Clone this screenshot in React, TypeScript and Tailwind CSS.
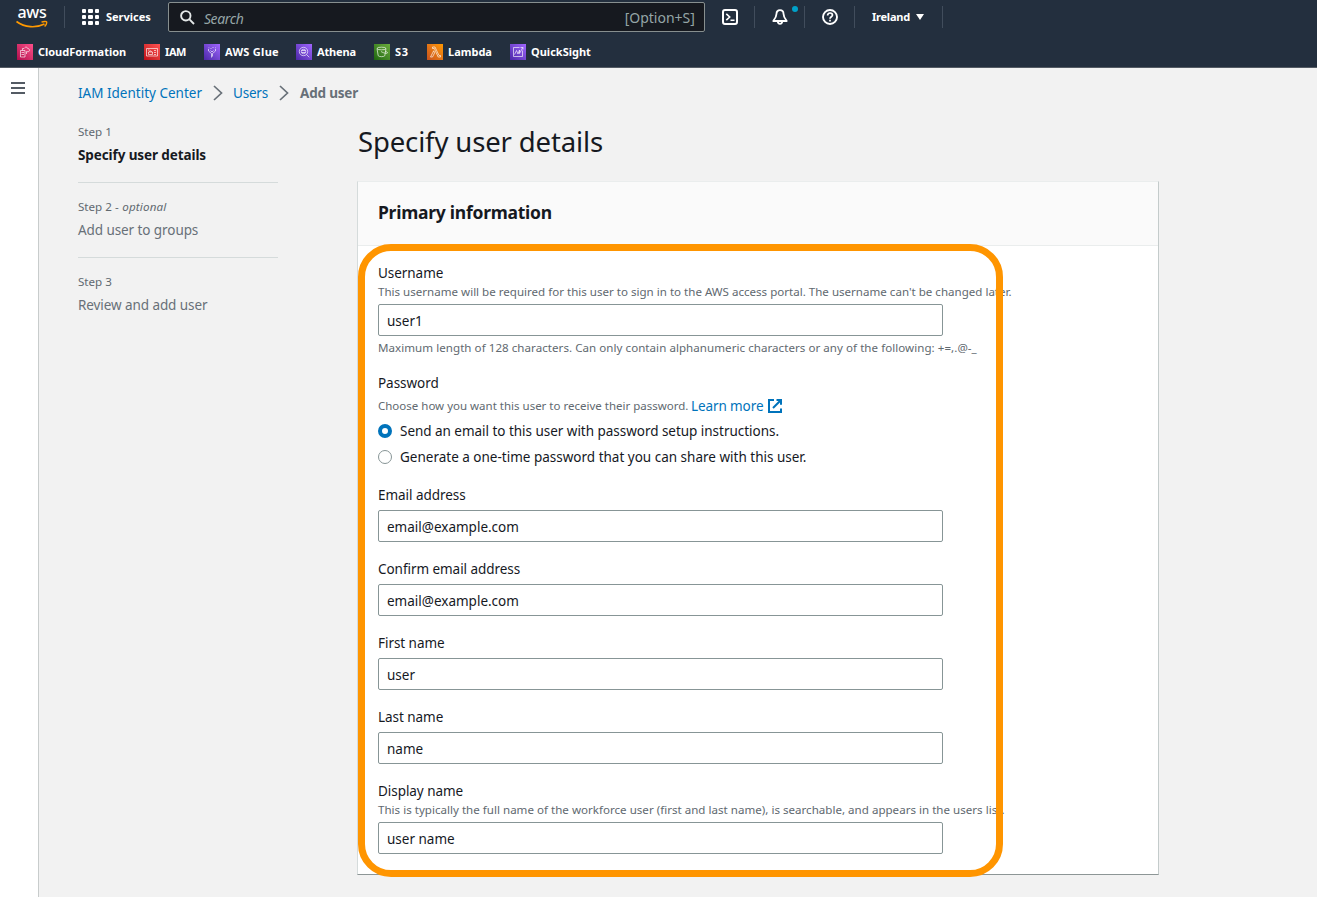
import type { ReactNode } from "react";

type Service = { name: string; width: string; fill: string; text: string; icon: ReactNode };

const services: Service[] = [
  {
    name: "CloudFormation",
    width: "w-[127px]",
    fill: "from-[#b0084d] to-[#ff4f8b]",
    text: "tracking-[-0.03px]",
    icon: <path d="M3.5 6.500h4.500v6.500h-4.500zM4.500 8.500h2.500M4.500 10.500h2.500M5.500 6.500V4.500h1.500M7.500 4c1-1.400 2.800-1 3.200.5 2.400.2 2.400 3 .3 3.200H9.500M9.500 7.500v2.500" />,
  },
  {
    name: "IAM",
    width: "w-[60px]",
    fill: "from-[#bd0816] to-[#ff5252]",
    text: "tracking-[-0.4px]",
    icon: <path d="M2.500 4.500h11v7.500h-11zM4 6h1.500M4.500 10.500h4v-2.500h-4zM5.500 8c0-1.500 2-1.500 2 0M10 6.500h2M10 8.500h2M10 10.500h2" />,
  },
  {
    name: "AWS Glue",
    width: "w-[92px]",
    fill: "from-[#4d27a8] to-[#a166ff]",
    text: "tracking-[0.28px]",
    icon: <path d="M4.500 5v2L7.500 9.500v4M11.500 5v2L8.500 9.500v3M6.500 6.500l1.500 1.500 1.500-1.500M6.500 4.500h1M8.500 3.500h1M4.500 3.800h.8M11 3.800h.8" />,
  },
  {
    name: "Athena",
    width: "w-[78px]",
    fill: "from-[#4d27a8] to-[#a166ff]",
    text: "tracking-[-0.15px]",
    icon: (
      <>
        <circle cx="7.500" cy="7.500" r="4.200" />
        <circle cx="7.500" cy="7.500" r="2.200" />
        <path d="M10.500 10.500l2.800 2.800M5.500 6.500h4M5.500 8.500h4" />
      </>
    ),
  },
  {
    name: "S3",
    width: "w-[53px]",
    fill: "from-[#1b660f] to-[#6cae3e]",
    text: "tracking-[0.8px]",
    icon: (
      <>
        <ellipse cx="7.500" cy="4.500" rx="4.500" ry="1.300" />
        <path d="M3 4.500l1.200 7.200c1 1.300 5.600 1.300 6.600 0L12 4.500M7 7.500c2 1.400 6.500 2.600 6.500 1.300 0-.6-1-1.200-2.200-1.500" />
      </>
    ),
  },
  {
    name: "Lambda",
    width: "w-[83px]",
    fill: "from-[#c8511b] to-[#ff9900]",
    text: "tracking-normal",
    icon: <path d="M5.500 3h2.500l4 8.500h1.500v1.500h-2.300L7.300 4.500H5.500zM6.700 6.800L3.500 13h2l2.200-4.200z" />,
  },
  {
    name: "QuickSight",
    width: "w-[90px]",
    fill: "from-[#4d27a8] to-[#a166ff]",
    text: "tracking-normal",
    icon: <path d="M9.500 3.500h-6v9h9v-6M4.500 10.500L6.500 6.500l1.500 3.500 1.500-4v3.500l3.300-6M10.500 3.500h2.500v2" />,
  },
];

function Divider({ className = "" }: { className?: string }) {
  return <span className={`h-[22px] w-px shrink-0 bg-[#414d5c] ${className}`} />;
}

function AwsLogo() {
  return (
    <div className="flex w-8 flex-col items-center">
      <span className="h-[15px] text-[16px] leading-[14px] font-medium tracking-[-0.2px] text-white">aws</span>
      <svg width="32" height="9" viewBox="0 0 32 9" fill="none" stroke="#ff9900" strokeWidth="1.700">
        <path d="M.5 1.500C9 7.800 20 8.200 28.500 4" />
        <path d="M25.500 2.200c2-.8 4.800-1 5.100-.3.300.8-.5 3-2 4.600" strokeWidth="1.400" />
      </svg>
    </div>
  );
}

function TopBar() {
  return (
    <header className="h-[68px] border-b border-[#545b64] bg-[#232f3e] text-white">
      <div className="flex h-[34px] items-center">
        <div className="ml-4 flex w-12 items-center">
          <AwsLogo />
        </div>
        <Divider />
        <div className="ml-[17px] grid grid-cols-3 gap-[2px]">
          {Array.from({ length: 9 }, (_, i) => (
            <span key={i} className="size-[4.300px] rounded-[1px] bg-white" />
          ))}
        </div>
        <span className="ml-[7px] w-[62px] text-[11px] font-bold">Services</span>
        <div className="flex h-[30px] w-[537px] items-center rounded-xs border border-[#878f8f] bg-[#16191f] pr-[9px] pl-[11px] text-[#95a5a6]">
          <svg width="15" height="15" viewBox="0 0 15 15" fill="none" stroke="#e4e8e8" strokeWidth="1.900">
            <circle cx="5.800" cy="5.800" r="4.700" />
            <path d="M9.200 9.200l4.800 4.800" />
          </svg>
          <span className="ml-[9px] flex-1 pt-[2px] text-[14px] tracking-[-0.350px] italic">Search</span>
          <span className="text-[14px]">[Option+S]</span>
        </div>
        <svg className="ml-[17px]" width="16" height="16" viewBox="0 0 16 16" fill="none" stroke="white" strokeWidth="2">
          <rect x="1" y="1" width="14" height="14" rx="2" />
          <path d="M4.300 4.800L7.700 8l-3.400 3.200M8.500 11.200h4" strokeWidth="1.600" />
        </svg>
        <Divider className="ml-4" />
        <div className="relative ml-[17px] size-4">
          <svg width="16" height="16" viewBox="0 0 16 16" fill="none" stroke="white" strokeWidth="1.800" strokeLinejoin="round">
            <path d="M8 1.200c-2.300 0-3.500 1.700-3.500 3.600 0 3-1.300 4.600-3.200 7.200h13.400c-1.900-2.600-3.200-4.200-3.200-7.200C11.500 2.900 10.300 1.200 8 1.200z" />
            <path d="M5.800 12.300c0 3.300 4.400 3.300 4.400 0" />
          </svg>
          <span className="absolute -top-[3px] left-5 size-[6px] rounded-full bg-[#00a1c9]" />
        </div>
        <Divider className="ml-4" />
        <svg className="ml-[17px]" width="16" height="16" viewBox="0 0 16 16" fill="none" stroke="white" strokeWidth="1.900">
          <circle cx="8" cy="8" r="7" />
          <path d="M5.600 6.500c0-3.300 4.900-3.200 4.900-.4C10.500 7.800 8 7.700 8 9.800M8 10.800v1.700" strokeWidth="1.700" />
        </svg>
        <Divider className="ml-4" />
        <span className="ml-[17px] w-11 text-[11px] font-bold tracking-[-0.2px]">Ireland</span>
        <svg width="8" height="6" viewBox="0 0 8 6" fill="white">
          <path d="M0 0h8L4 6z" />
        </svg>
        <Divider className="ml-[18px]" />
      </div>
      <nav className="flex h-[35px] items-center pl-[17px]">
        {services.map((s) => (
          <a key={s.name} className={`flex shrink-0 items-center gap-[5px] text-[11px] font-bold whitespace-nowrap ${s.width}`}>
            <svg
              className={`size-4 bg-linear-to-tr ${s.fill}`}
              viewBox="0 0 16 16"
              fill="none"
              stroke="white"
              strokeOpacity=".8"
              strokeWidth=".8"
            >
              {s.icon}
            </svg>
            <span className={`pt-[2px] ${s.text}`}>{s.name}</span>
          </a>
        ))}
      </nav>
    </header>
  );
}

function Chevron() {
  return (
    <svg className="shrink-0" width="10" height="16" viewBox="0 0 10 16" fill="none" stroke="#687078" strokeWidth="1.700">
      <path d="M1 1l7.500 7L1 15" />
    </svg>
  );
}

function Step({ label, optional, title, active, last }: { label: string; optional?: boolean; title: string; active?: boolean; last?: boolean }) {
  return (
    <li className={last ? "h-[75px]" : "mb-[14px] h-[61px] border-b border-[#d5dbdb]"}>
      <div className="h-[22px] text-[11.600px] leading-5 text-[#616970]">
        {label}
        {optional && (
          <span className="tracking-[0.180px]">
            {" "}
            - <i>optional</i>
          </span>
        )}
      </div>
      <div className={active ? "text-[13.500px] leading-[22px] font-bold tracking-[-0.100px] text-[#16191f]" : "text-[13.500px] leading-[22px] tracking-[-0.080px] text-[#687078]"}>{title}</div>
    </li>
  );
}

function TextInput({ value }: { value: string }) {
  return (
    <input
      readOnly
      value={value}
      className="block h-8 w-[565px] rounded-xs border border-[#879596] bg-white px-2 pt-[2px] text-[13.500px] text-[#16191f] outline-none"
    />
  );
}

function Label({ children }: { children: ReactNode }) {
  return <div className="h-[22px] text-[13.500px] leading-[22px] tracking-[-0.050px] text-[#16191f]">{children}</div>;
}

function Hint({ children, className }: { children: ReactNode; className: string }) {
  return <div className={`text-[11.570px] whitespace-nowrap text-[#616970] ${className}`}>{children}</div>;
}

function SimpleField({ label, value }: { label: string; value: string }) {
  return (
    <div className="mb-4">
      <Label>{label}</Label>
      <div className="mt-1">
        <TextInput value={value} />
      </div>
    </div>
  );
}

function Radio({ checked, children }: { checked?: boolean; children: ReactNode }) {
  return (
    <label className="flex h-[26px] items-center gap-2 text-[13.500px] text-[#16191f]">
      <span className={checked ? "size-[14px] rounded-full border-[4.500px] border-[#0073bb] bg-white" : "size-[14px] rounded-full border border-[#879596] bg-white"} />
      <span className={checked ? "tracking-[-0.030px]" : "tracking-normal"}>{children}</span>
    </label>
  );
}

export default function App() {
  return (
    <div className="flex h-[897px] w-[1317px] flex-col overflow-hidden bg-[#f2f2f2] font-['Noto_Sans',sans-serif]">
      <TopBar />
      <div className="flex flex-1">
        <aside className="w-[39px] border-r border-[#c8cccc] bg-white pt-[14px] pl-[11px]">
          <div className="flex w-[14px] flex-col gap-[3px]">
            <span className="h-[2px] bg-[#545b64]" />
            <span className="h-[2px] bg-[#545b64]" />
            <span className="h-[2px] bg-[#545b64]" />
          </div>
        </aside>
        <main className="pt-[14px] pl-[39px]">
          <nav className="flex h-[22px] items-center text-[13.500px] text-[#0073bb]">
            <span className="w-[135px] whitespace-nowrap">IAM Identity Center</span>
            <Chevron />
            <span className="ml-[10px] w-[46px] tracking-[-0.200px]">Users</span>
            <Chevron />
            <span className="ml-[11px] text-[13.500px] font-bold tracking-[-0.190px] text-[#687078]">Add user</span>
          </nav>
          <div className="flex">
            <ol className="w-[200px] pt-[18px]">
              <Step label="Step 1" title="Specify user details" active />
              <Step label="Step 2" optional title="Add user to groups" />
              <Step label="Step 3" title="Review and add user" last />
            </ol>
            <div className="ml-20 w-[801px] pt-5">
              <h1 className="h-[57px] text-[27.500px] leading-9 tracking-[-0.140px] text-[#16191f]">Specify user details</h1>
              <section className="relative -ml-px h-[694px] w-[802px] border border-t-[#eaeded] border-r-[#c4cbcb] border-b-[#8d9696] border-l-[#d5dbdb] bg-white">
                <h2 className="flex h-16 items-center border-b border-[#eaeded] bg-[#fafafa] pb-[2px] pl-5 text-[17.500px] font-bold tracking-[-0.250px] text-[#16191f]">
                  Primary information
                </h2>
                <div className="pt-4 pl-5">
                  <Label>Username</Label>
                  <Hint className="h-5 leading-4">
                    This username will be required for this user to sign in to the AWS access portal. The username can't be changed later.
                  </Hint>
                  <TextInput value="user1" />
                  <Hint className="mt-1 mb-3 h-5 leading-4 tracking-[0.045px]">
                    Maximum length of 128 characters. Can only contain alphanumeric characters or any of the following: +=,.@-_
                  </Hint>
                  <Label>Password</Label>
                  <div className="flex h-[24px] items-center text-[#0073bb]">
                    <span className="w-[313px] text-[11.500px] whitespace-nowrap text-[#616970]">Choose how you want this user to receive their password.</span>
                    <span className="w-[77px] text-[13.500px] tracking-[-0.100px] whitespace-nowrap">Learn more</span>
                    <svg width="14" height="14" viewBox="0 0 14 14" fill="none" stroke="#0073bb" strokeWidth="2">
                      <path d="M6 1H1v12h12V9.500" />
                      <path d="M8.500 1H13v4.800M13 1L5 9" />
                    </svg>
                  </div>
                  <Radio checked>Send an email to this user with password setup instructions.</Radio>
                  <Radio>Generate a one-time password that you can share with this user.</Radio>
                  <div className="pt-[14px]">
                    <SimpleField label="Email address" value="email@example.com" />
                    <SimpleField label="Confirm email address" value="email@example.com" />
                    <SimpleField label="First name" value="user" />
                    <SimpleField label="Last name" value="name" />
                  </div>
                  <Label>Display name</Label>
                  <Hint className="h-5 leading-4 tracking-[0.012px]">
                    This is typically the full name of the workforce user (first and last name), is searchable, and appears in the users list.
                  </Hint>
                  <TextInput value="user name" />
                </div>
                <div className="absolute top-[62px] left-0 h-[633px] w-[645px] rounded-[33px] border-7 border-[#ff9500]" />
              </section>
            </div>
          </div>
        </main>
      </div>
    </div>
  );
}
